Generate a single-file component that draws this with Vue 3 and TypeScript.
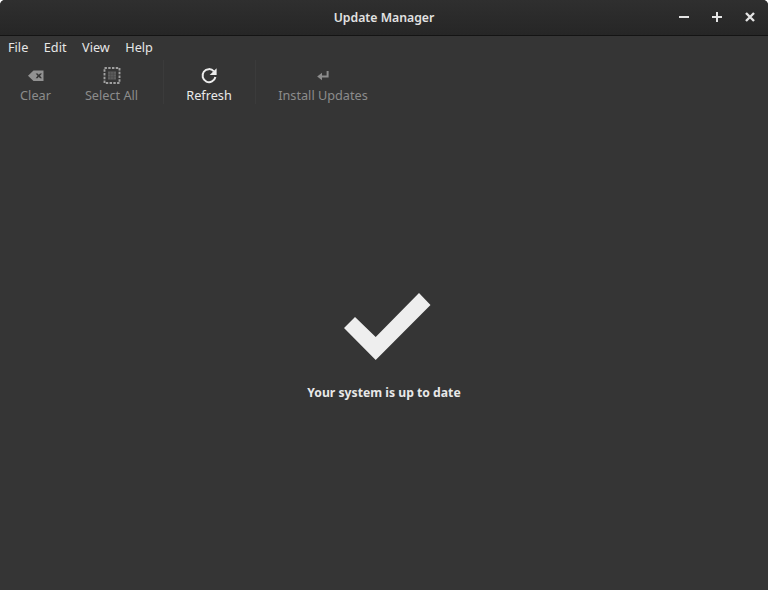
<script setup lang="ts">
const menus: string[] = ['File', 'Edit', 'View', 'Help']
</script>

<template>
  <div class="window">
    <header class="titlebar">
      <span class="title">Update Manager</span>
      <div class="controls">
        <svg class="ctl" width="12" height="12" viewBox="0 0 12 12"><path d="M1 6h10" stroke="#e4e4e4" stroke-width="2" fill="none"/></svg>
        <svg class="ctl" width="12" height="12" viewBox="0 0 12 12"><path d="M1 6h10M6 1v10" stroke="#e4e4e4" stroke-width="2" fill="none"/></svg>
        <svg class="ctl" width="12" height="12" viewBox="0 0 12 12"><path d="M2 2l8 8M10 2l-8 8" stroke="#e4e4e4" stroke-width="2.4" fill="none"/></svg>
      </div>
    </header>
    <nav class="menubar">
      <span v-for="m in menus" :key="m" class="menu">{{ m }}</span>
    </nav>
    <div class="toolbar">
      <div class="btn off w-clear">
        <svg width="18" height="18" viewBox="0 0 18 18"><path fill-rule="evenodd" d="M6.5 3.5h10v10.5h-10L1 8.8zM8.6 6.4l2 2.4-2 2.4h2l1.2-1.4 1.2 1.4h2l-2-2.4 2-2.4h-2l-1.2 1.4-1.2-1.4z" fill="#929292"/></svg>
        <span>Clear</span>
      </div>
      <div class="btn off w-select">
        <svg width="18" height="18" viewBox="0 0 18 18">
          <rect x="1.5" y="1" width="15" height="15" fill="none" stroke="#a0a0a0" stroke-width="1.9" stroke-dasharray="2.4 1.35"/>
          <rect x="5" y="4.5" width="8" height="8" fill="#5e5e5e"/>
          <path d="M7.7 4.5v8M10.3 4.5v8M5 7.2h8M5 9.8h8" stroke="#474747" stroke-width=".6" fill="none"/>
        </svg>
        <span>Select All</span>
      </div>
      <i class="sep first"></i>
      <div class="btn on w-refresh">
        <svg width="18" height="18" viewBox="0 0 18 18"><path d="M13.9 4.3A6.5 6.5 0 1 0 15.4 10" fill="none" stroke="#ececec" stroke-width="2"/><path d="M16.6 1.2v6.9H9.7z" fill="#ececec"/></svg>
        <span>Refresh</span>
      </div>
      <i class="sep"></i>
      <div class="btn off w-install">
        <svg width="18" height="18" viewBox="0 0 18 18"><path d="M13.6 4v5.5H6.5" fill="none" stroke="#8c8c8c" stroke-width="2"/><path d="M8 5.7v7.6L3.2 9.5z" fill="#8c8c8c"/></svg>
        <span>Install Updates</span>
      </div>
    </div>
    <main class="content">
      <svg class="check" width="88" height="70" viewBox="0 0 88 70"><path d="M0 35 11 24 31.7 44 75 0 86.5 12 31.7 67z" fill="#eeeeee"/></svg>
      <p class="status">Your system is up to date</p>
    </main>
  </div>
</template>

<style scoped>
.window {
  width: 768px;
  height: 590px;
  display: flex;
  flex-direction: column;
  background: #353535;
  font-family: "Noto Sans", sans-serif;
  font-size: 12.7px;
  overflow: hidden;
  border-radius: 5px 5px 0 0;
}
.titlebar {
  position: relative;
  height: 36px;
  flex: none;
  box-sizing: border-box;
  border-bottom: 1px solid #141414;
  background: linear-gradient(#2f2f2f, #262626);
  display: flex;
  align-items: center;
  justify-content: center;
}
.title {
  color: #e2e2e2;
  font-weight: 600;
  font-size: 12.25px;
}
.controls {
  position: absolute;
  right: 12px;
  top: 11px;
  display: flex;
  gap: 21px;
}
.ctl { display: block; }
.menubar {
  height: 24px;
  flex: none;
  display: flex;
  align-items: center;
  gap: 15.5px;
  padding-left: 8px;
  padding-bottom: 2px;
  box-sizing: border-box;
}
.menu { color: #e6e6e6; }
.toolbar {
  height: 50px;
  flex: none;
  display: flex;
  padding-left: 7px;
}
.btn {
  display: flex;
  flex-direction: column;
  align-items: center;
  height: 45px;
  padding-top: 7px;
  box-sizing: border-box;
}
.btn svg { flex: none; }
.btn span { margin-top: 1px; line-height: 18px; white-space: nowrap; }
.on { color: #eaeaea; }
.off { color: #8c8c8c; }
.w-clear { width: 57px; margin-right: 6px; }
.w-select { width: 83px; }
.w-refresh { width: 72px; }
.w-install { width: 116px; }
.sep {
  width: 1px;
  height: 44px;
  margin: 0 9.5px;
  background: #3b3b3b;
}
.sep.first { margin: 0 9.5px 0 9.5px; }
.content {
  flex: 1;
  display: flex;
  flex-direction: column;
  align-items: center;
  padding-top: 183px;
}
.check { display: block; margin-left: 8px; }
.status {
  margin: 21px 0 0;
  color: #e8e8e8;
  font-weight: 700;
  font-size: 12.2px;
  line-height: 18px;
}
</style>
<style>
html, body { background: #ffffff; margin: 0; }
</style>
